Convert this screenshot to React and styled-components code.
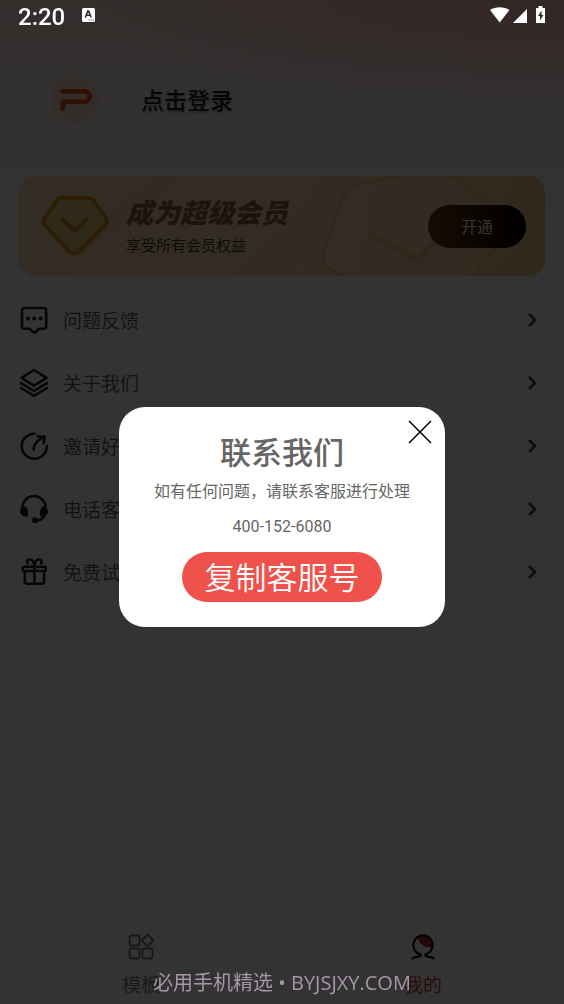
import React, { useState } from "react";
import styled, { createGlobalStyle } from "styled-components";

const menuItems = [
	{ key: "feedback", label: "问题反馈" },
	{ key: "about", label: "关于我们" },
	{ key: "invite", label: "邀请好友" },
	{ key: "service", label: "电话客服" },
	{ key: "trial", label: "免费试用" },
];

const MenuIcon = ({ name }) => {
	return (
		<IconBox viewBox='0 0 30 30' aria-hidden='true'>
			{name === "feedback" && (
				<>
					<path d='M5.200 3H25a2.200 2.200 0 0 1 2.200 2.200V21.500a2.200 2.200 0 0 1-2.200 2.200H20.200L17.300 26.600a2.800 2.800 0 0 1-3.800 0L10.600 23.700H5.200A2.200 2.200 0 0 1 3 21.500V5.200A2.200 2.200 0 0 1 5.200 3Z' />
					<g fill='#222' stroke='none'>
						<circle cx='8.800' cy='13.500' r='1.900' />
						<circle cx='15.200' cy='13.500' r='1.900' />
						<circle cx='21.600' cy='13.500' r='1.900' />
					</g>
				</>
			)}
			{name === "about" && (
				<>
					<path d='M15 2 27.500 9.800 15 17.600 2.500 9.800Z' />
					<path d='M2 15.200 15 23 28 15.200' />
					<path d='M2 20 15 27.800 28 20' />
				</>
			)}
			{name === "invite" && (
				<>
					<path d='M15.500 2.700A12.500 12.500 0 1 0 27.800 15' />
					<path d='M14.500 18.500C15 13.500 18 9 24.500 6' />
					<path d='M18.500 5.200 25.500 5.500 24.500 12.500' />
				</>
			)}
			{name === "service" && (
				<>
					<path d='M3.500 15.500V13.500A11.500 11.500 0 0 1 26.500 13.500V15.500' />
					<path d='M26 20c-1 4-4 6.200-9 6.700' />
					<g fill='#222' stroke='none'>
						<path d='M6.500 12.500C9 14.500 9.800 19 8.600 22.500C4.500 22.800 1 20.700 1 17.500C1 14.700 3.500 12.500 6.500 12.500Z' />
						<path d='M23.500 12.500C21 14.500 20.200 19 21.400 22.500C25.500 22.800 29 20.700 29 17.500C29 14.700 26.500 12.500 23.500 12.500Z' />
						<circle cx='16' cy='26.300' r='3' />
					</g>
				</>
			)}
			{name === "trial" && (
				<>
					<rect x='3.800' y='9.800' width='23' height='4.200' rx='1.500' />
					<path d='M5.800 14V24.500a2.200 2.200 0 0 0 2.200 2.200H22.800a2.200 2.200 0 0 0 2.200-2.200V14M15.400 9V26.500' />
					<path d='M15.300 9C15 4.500 13 2.500 10.800 2.500C8.500 2.500 7.300 4.300 8.700 6.200' />
					<path d='M15.500 9C15.800 4.500 17.800 2.500 20 2.500C22.300 2.500 23.500 4.300 22.100 6.200' />
				</>
			)}
		</IconBox>
	);
};

const App = () => {
	const [modalVisible, setModalVisible] = useState(true);

	const copyNumber = () => {
		if (navigator.clipboard) {
			navigator.clipboard.writeText("400-152-6080");
		}
		setModalVisible(false);
	};

	return (
		<>
			<GlobalStyle />
			<PageWrapper>
				<StatusBar>
					<Clock>2:20</Clock>
					<svg width='13' height='14' viewBox='0 0 13 14' aria-hidden='true'>
						<rect width='13' height='14' rx='1.500' fill='#fff' />
						<path
							d='M3.300 9.500 5.800 3H6.700L9.200 9.500M4.300 7.300H8.200'
							fill='none'
							stroke='#332d2c'
							strokeWidth='1.600'
						/>
						<path d='M6.500 12H12' stroke='#777' strokeDasharray='1.500 .7' />
					</svg>
					<Signals viewBox='0 0 56 18' aria-hidden='true'>
						<path d='M0 4C5.500 .3 14 .3 19.500 4L9.700 16.500Z' />
						<path d='M37 3V17H23Z' />
						<path
							fillRule='evenodd'
							d='M48.500 0h4v2H55v15H46V2h2.500ZM51.500 4.500 48 10h2v4.500L53.500 9h-2Z'
						/>
					</Signals>
				</StatusBar>

				<Profile>
					<Avatar viewBox='0 0 50 50' aria-hidden='true'>
						<circle cx='24.500' cy='24.500' r='24' fill='#ffe0d0' stroke='#fff3ec' />
						<path
							d='M12.500 16.300H34.500a5 5 0 0 1 0 10.400H12.800V33.500'
							fill='none'
							stroke='#e85008'
							strokeWidth='4.800'
							strokeLinecap='round'
							strokeLinejoin='round'
						/>
					</Avatar>
					<LoginButton type='button'>点击登录</LoginButton>
				</Profile>

				<VipCard>
					<CardArt
						viewBox='0 0 526 100'
						preserveAspectRatio='xMaxYMid slice'
						aria-hidden='true'>
						<path d='M140 0H165L45 100H0V90Z' fill='#ffd0a8' opacity='.25' />
						<path d='M310 0H350L270 100H210Z' fill='#ffcfae' opacity='.35' />
						<path
							d='M398 -4 340 8Q330 11 325 20L304 76Q301 84 308 90L330 104H450L490 55 474 32 426 -4Z'
							fill='#ffe1b5'
							fillOpacity='.3'
							stroke='#f3bd7c'
							strokeWidth='3'
						/>
						<path
							d='M350 58 400 84 416 65'
							fill='none'
							stroke='#f0bd85'
							strokeWidth='7'
						/>
						<path d='M430 0H526V100H475L510 50Z' fill='#f2c080' opacity='.3' />
					</CardArt>
					<Diamond viewBox='0 0 72 64' aria-hidden='true'>
						<path d='M22 5H52L70 28 38 62 14 40Z' fill='#f0c050' />
						<path
							d='M20 4H48Q50 4 52 6L65 24Q67 27 65 30L37 58Q33 61 29 58L4 31Q1 28 4 24L16 6Q18 4 20 4Z'
							fill='#eec878'
							stroke='#df8f14'
							strokeWidth='4'
						/>
						<path
							d='M21 25 34 37 46 25'
							fill='none'
							stroke='#d08430'
							strokeWidth='4'
							strokeLinecap='round'
						/>
					</Diamond>
					<VipText>
						<h2>成为超级会员</h2>
						<p>享受所有会员权益</p>
					</VipText>
					<OpenButton type='button'>开通</OpenButton>
				</VipCard>

				<Menu>
					{menuItems.map((item) => (
						<MenuRow key={item.key} href={`#${item.key}`}>
							<MenuIcon name={item.key} />
							<span>{item.label}</span>
							<Chevron viewBox='0 0 10 16' aria-hidden='true'>
								<path d='M2 2 8 8 2 14' />
							</Chevron>
						</MenuRow>
					))}
				</Menu>

				<TabBar>
					<Tab href='#templates'>
						<svg width='28' height='28' viewBox='0 0 28 28' aria-hidden='true'>
							<g fill='none' stroke='#777' strokeWidth='1.800'>
								<rect x='2.500' y='2.500' width='10' height='10' rx='2' />
								<rect x='2.500' y='15.500' width='10' height='10' rx='2' />
								<rect x='15.500' y='15.500' width='10' height='10' rx='2' />
								<path
									d='M20.500 1.500 26.500 7.500 20.500 13.500 14.500 7.500Z'
									strokeLinejoin='round'
								/>
							</g>
						</svg>
						模板
					</Tab>
					<Tab href='#mine' $active>
						<svg width='28' height='28' viewBox='0 0 28 28' aria-hidden='true'>
							<path
								d='M9 5C12 1.500 19 2 22 7Q24 10 23 14.500C16 15 10 11 9 5Z'
								fill='#a82a2a'
							/>
							<path
								d='M2.500 26C5 23.700 8 24.300 11.500 23V21.300A9.600 9.600 0 1 1 16.500 21.300V23C20 24.300 23 23.700 25.500 26'
								fill='none'
								stroke='#111'
								strokeWidth='2.200'
								strokeLinejoin='round'
							/>
						</svg>
						我的
					</Tab>
				</TabBar>
			</PageWrapper>

			{modalVisible && (
				<Overlay>
					<Modal role='dialog' aria-modal='true' aria-labelledby='contact-title'>
						<CloseButton
							type='button'
							aria-label='关闭'
							onClick={() => setModalVisible(false)}>
							<svg width='24' height='24' viewBox='0 0 24 24'>
								<path d='M1 1 23 23M23 1 1 23' stroke='#000' strokeWidth='1.500' />
							</svg>
						</CloseButton>
						<h1 id='contact-title'>联系我们</h1>
						<p>如有任何问题，请联系客服进行处理</p>
						<p>400-152-6080</p>
						<CopyButton type='button' onClick={copyNumber}>
							复制客服号
						</CopyButton>
					</Modal>
				</Overlay>
			)}
			<Watermark>必用手机精选 • BYJSJXY.COM</Watermark>
		</>
	);
};

export default App;

const GlobalStyle = createGlobalStyle`
	* {
		box-sizing: border-box;
	}

	body {
		margin: 0;
		background: #fff;
		font-family: Roboto, "Noto Sans CJK SC", sans-serif;
	}

	h1, h2, p {
		margin: 0;
	}

	button {
		border: 0;
		padding: 0;
		font-family: inherit;
		cursor: pointer;
	}

	a {
		color: inherit;
		text-decoration: none;
	}
`;

const PageWrapper = styled.div`
	display: flex;
	flex-direction: column;
	min-height: 100vh;
	background:
		radial-gradient(ellipse 80% 100px at 95% 0, #ffc0b8, transparent),
		linear-gradient(#fbe4dc, #f8f0ec 90px, #f7f6f8 170px, #fff 230px);
`;

/* drawn above the dimmed page */
const StatusBar = styled.header`
	position: relative;
	z-index: 3;
	display: flex;
	align-items: center;
	height: 34px;
	padding: 0 18px;
	color: #fff;

	> svg {
		margin-bottom: 4px;
	}
`;

const Clock = styled.time`
	width: 64px;
	font-size: 24px;
	font-weight: 500;
	line-height: 34px;
`;

const Signals = styled.svg`
	width: 56px;
	height: 18px;
	margin-left: auto;
	fill: #fff;
`;

const Profile = styled.section`
	display: flex;
	align-items: center;
	gap: 41px;
	height: 50px;
	margin: 41px 50px 51px;
`;

const Avatar = styled.svg`
	width: 50px;
	height: 50px;
`;

const LoginButton = styled.button`
	padding-top: 4px;
	background: none;
	color: #222;
	font-size: 23px;
	font-weight: 500;
	line-height: 32px;
	text-shadow: 1px 2px 2px #bbb;
`;

const VipCard = styled.section`
	position: relative;
	display: flex;
	align-items: center;
	height: 100px;
	margin: 0 19px;
	padding: 0 19px 0 22px;
	overflow: hidden;
	border-radius: 16px;
	background: linear-gradient(100deg, #fbdcb2, #fbdab0 50%, #f5cb92);

	> * {
		position: relative;
	}
`;

const CardArt = styled.svg`
	&& {
		position: absolute;
	}
	inset: 0;
	width: 100%;
	height: 100%;
`;

const Diamond = styled.svg`
	flex: none;
	width: 72px;
	height: 64px;
`;

const VipText = styled.div`
	padding-top: 4px;
	margin-left: 13px;

	h2 {
		color: #8a5a48;
		font-size: 27px;
		font-style: italic;
		font-weight: 900;
		line-height: 36px;
	}

	p {
		color: #4a2c1c;
		font-size: 15px;
		font-weight: 350;
		line-height: 28px;
	}
`;

const OpenButton = styled.button`
	width: 98px;
	height: 43px;
	margin-left: auto;
	border-radius: 22px;
	background: linear-gradient(90deg, #6e3a0a, #000);
	color: #fff;
	font-size: 16px;
	font-weight: 350;
`;

const Menu = styled.nav`
	display: flex;
	flex-direction: column;
	margin-top: 12px;
`;

const MenuRow = styled.a`
	display: flex;
	align-items: center;
	height: 63px;
	padding: 0 27px 0 19px;
	color: #555;
	font-size: 19px;
	font-weight: 350;

	span {
		flex: 1;
		margin-left: 14px;
	}
`;

const IconBox = styled.svg`
	width: 30px;
	height: 30px;
	fill: none;
	stroke: #222;
	stroke-width: 2.6;
	stroke-linecap: round;
	stroke-linejoin: round;
`;

const Chevron = styled.svg`
	width: 10px;
	height: 16px;
	fill: none;
	stroke: #444;
	stroke-width: 2.6;
`;

const TabBar = styled.nav`
	display: flex;
	height: 71px;
	margin-top: auto;
`;

const Tab = styled.a`
	display: flex;
	flex: 1;
	flex-direction: column;
	align-items: center;
	gap: 11px;
	color: ${(props) => (props.$active ? "#c8302c" : "#777")};
	font-size: 19px;
	font-weight: 350;
	line-height: 28px;
`;

const Overlay = styled.div`
	position: fixed;
	inset: 0;
	z-index: 2;
	display: flex;
	align-items: center;
	justify-content: center;
	padding-top: 30px;
	background: rgba(0, 0, 0, 0.8);
`;

const Modal = styled.div`
	position: relative;
	display: flex;
	flex-direction: column;
	align-items: center;
	padding: 27px 35px 25px;
	border-radius: 26px;
	background: #fff;
	color: #666;

	h1 {
		margin-bottom: 5px;
		font-size: 31px;
		font-weight: 500;
		line-height: 40px;
	}

	p {
		margin-bottom: 10px;
		font-size: 16px;
		line-height: 25px;
	}
`;

const CloseButton = styled.button`
	position: absolute;
	top: 13px;
	right: 13px;
	height: 24px;
	background: none;
`;

const CopyButton = styled.button`
	width: 200px;
	height: 50px;
	margin-top: 3px;
	padding-top: 4px;
	border-radius: 25px;
	background: #ef514b;
	color: #fff;
	font-size: 31px;
	font-weight: 350;
	line-height: 46px;
`;

const Watermark = styled.footer`
	position: fixed;
	right: 0;
	bottom: 7px;
	left: 0;
	z-index: 3;
	color: #a697a6;
	font-family: "Open Sans", "Noto Sans CJK SC", sans-serif;
	font-size: 20px;
	line-height: 28px;
	text-align: center;
	pointer-events: none;
`;
